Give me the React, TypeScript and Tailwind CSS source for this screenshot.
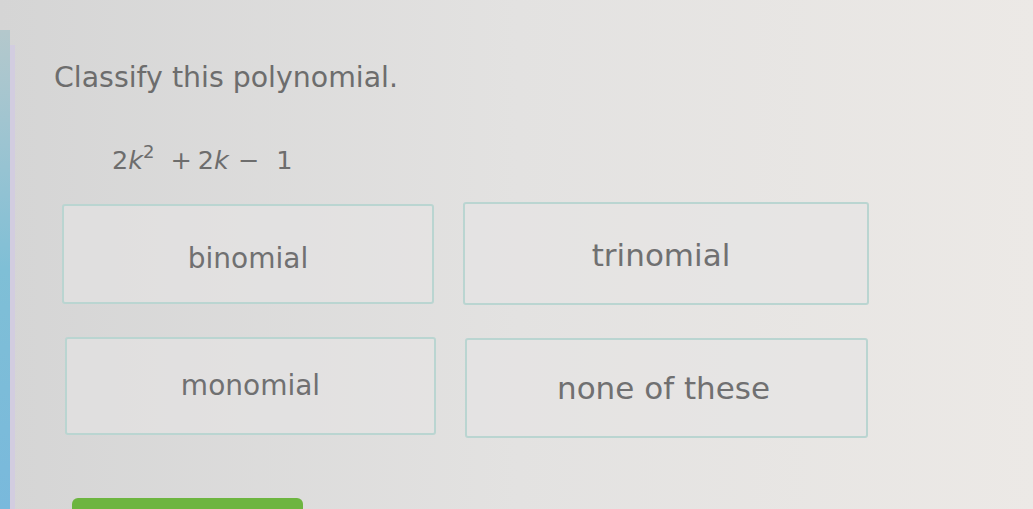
import * as React from "react";

const choices = [
  { label: "binomial", size: "text-[28px] pt-[10px]", box: "h-[100px] mt-[2px]" },
  { label: "trinomial", size: "text-[31px] pt-[4px] pr-[10px]", box: "h-[103px]" },
  { label: "monomial", size: "text-[28px]", box: "h-[98px] ml-[3px] w-[371px]" },
  { label: "none of these", size: "text-[31px] pr-[6px]", box: "h-[100px] mt-[1px] ml-[2px] w-[403px]" },
];

function Choice({ label, size, box }: { label: string; size: string; box: string }) {
  return (
    <button
      className={`flex items-center justify-center rounded-[3px] border-2 border-[#bad5d1] bg-[#e6e5e4]/60 text-[#707071] ${size} ${box}`}
    >
      {label}
    </button>
  );
}

export default function App() {
  return (
    <div
      className="flex h-[509px] w-full overflow-hidden bg-linear-to-r from-[#d5d5d5] via-[#e3e2e1] to-[#ece9e6]"
      style={{ fontFamily: '"DejaVu Sans", Verdana, sans-serif' }}
    >
      {/* side rail */}
      <div className="flex">
        <div className="mt-[30px] w-[10px] bg-linear-to-b from-[#b4c8cc] via-[#7fbfd6] to-[#79b9dc]" />
        <div className="mt-[45px] w-[5px] bg-[#d2cde0]" />
      </div>

      <div className="flex flex-1 flex-col pl-[39px] pt-[64px]">
        <h1 className="text-[28.4px] leading-none text-[#6d6d6d]">Classify this polynomial.</h1>

        <div className="ml-[58px] mt-[56px] flex items-baseline text-[25.5px] leading-none text-[#6d6d6d]">
          <span>2</span>
          <span className="italic">k</span>
          <span className="relative -top-[11px] text-[18px]">2</span>
          <span className="ml-[16px]">+</span>
          <span className="ml-[6px]">2</span>
          <span className="italic">k</span>
          <span className="ml-[9px]">−</span>
          <span className="ml-[17px]">1</span>
        </div>

        <div className="ml-[8px] mt-[28px] grid grid-cols-[372px_406px] items-start gap-x-[29px] gap-y-[32px]">
          {choices.map((c) => (
            <Choice key={c.label} {...c} />
          ))}
        </div>

        <div className="ml-[18px] mt-[60px] h-[14px] w-[231px] rounded-t-[6px] bg-[#6db540]" />
      </div>
    </div>
  );
}
